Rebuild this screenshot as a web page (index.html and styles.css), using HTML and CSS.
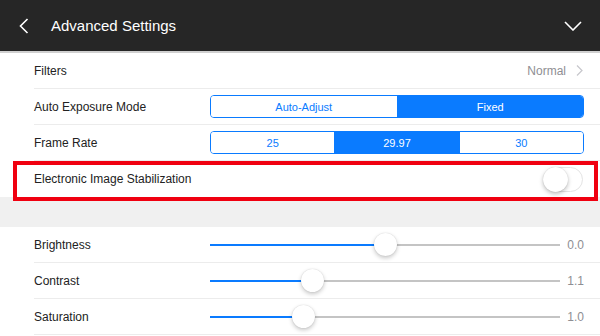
FILE: index.html
```html
<!DOCTYPE html>
<html lang="en">
<head>
  <meta charset="UTF-8">
  <meta name="viewport" content="width=device-width, initial-scale=1.0">
  <title>Advanced Settings</title>
  <link rel="stylesheet" href="styles.css">
</head>
<body>

  <!-- Barra superior -->
  <header class="topbar">
    <svg class="back-icon" width="10" height="16" viewBox="0 0 10 16">
      <path d="M8.5 1 L1.5 8 L8.5 15" fill="none" stroke="#fff" stroke-width="1.6"/>
    </svg>
    <h1 class="title">Advanced Settings</h1>
    <svg class="down-icon" width="18" height="10" viewBox="0 0 18 10">
      <path d="M1 1 L9 9 L17 1" fill="none" stroke="#fff" stroke-width="1.6"/>
    </svg>
  </header>

  <!-- Ajustes de cámara -->
  <section class="group">
    <div class="row">
      <div class="row-body">
        <span class="label">Filters</span>
        <span class="detail">Normal</span>
        <svg class="detail-arrow" width="7" height="11" viewBox="0 0 7 11">
          <path d="M1 0.5 L6 5.5 L1 10.5" fill="none" stroke="#c7c7cc" stroke-width="1.2"/>
        </svg>
      </div>
    </div>

    <div class="row">
      <div class="row-body">
        <span class="label">Auto Exposure Mode</span>
        <div class="segmented">
          <button class="segment">Auto-Adjust</button>
          <button class="segment active">Fixed</button>
        </div>
      </div>
    </div>

    <div class="row">
      <div class="row-body">
        <span class="label">Frame Rate</span>
        <div class="segmented">
          <button class="segment">25</button>
          <button class="segment active">29.97</button>
          <button class="segment">30</button>
        </div>
      </div>
    </div>

    <div class="row highlight">
      <div class="row-body no-line">
        <span class="label">Electronic Image Stabilization</span>
        <span class="switch"><span class="knob"></span></span>
      </div>
    </div>
  </section>

  <div class="spacer"></div>

  <!-- Ajustes de imagen -->
  <section class="group">
    <div class="row">
      <div class="row-body">
        <span class="label">Brightness</span>
        <div class="slider">
          <div class="track"><div class="fill" style="width: 50%"></div><span class="thumb" style="left: 50%"></span></div>
          <span class="value">0.0</span>
        </div>
      </div>
    </div>

    <div class="row">
      <div class="row-body">
        <span class="label">Contrast</span>
        <div class="slider">
          <div class="track"><div class="fill" style="width: 29%"></div><span class="thumb" style="left: 29%"></span></div>
          <span class="value">1.1</span>
        </div>
      </div>
    </div>

    <div class="row">
      <div class="row-body">
        <span class="label">Saturation</span>
        <div class="slider">
          <div class="track"><div class="fill" style="width: 26.5%"></div><span class="thumb" style="left: 26.5%"></span></div>
          <span class="value">1.0</span>
        </div>
      </div>
    </div>
  </section>

</body>
</html>
```

FILE: styles.css
```css
/* Estilos globales */
body {
  font-family: 'Liberation Sans', Arial, sans-serif;
  background-color: #fff;
  color: #222;
  margin: 0;
  padding: 0;
  overflow: hidden;
}

/* Barra superior */
.topbar {
  display: flex;
  align-items: center;
  height: 53px;
  background-color: #262626;
  border-bottom: 2px solid #d0d0d0;
  box-sizing: border-box;
  padding: 0 18px 0 19px;
}

.back-icon {
  margin-right: 22px;
}

.title {
  flex: 1;
  margin: 0;
  color: #fff;
  font-size: 15px;
  font-weight: normal;
}

.down-icon {
  margin-top: 1px;
}

/* Filas */
.row {
  display: flex;
  padding-left: 34px;
}

.row-body {
  flex: 1;
  display: flex;
  align-items: center;
  height: 35px;
  padding-right: 16px;
  border-bottom: 1px solid #ececec;
}

.row-body.no-line {
  height: 36px;
  border-bottom: none;
}

.label {
  width: 176px;
  font-size: 12px;
  color: #222;
}

.detail {
  margin-left: auto;
  margin-right: 10px;
  font-size: 12px;
  color: #8e8e93;
}

.detail-arrow {
  margin-right: 1px;
}

/* Control segmentado */
.segmented {
  flex: 1;
  display: flex;
  height: 23px;
  border: 1px solid #0a7bff;
  border-radius: 4px;
  overflow: hidden;
  box-sizing: border-box;
}

.segment {
  flex: 1;
  border: none;
  border-left: 1px solid #0a7bff;
  background-color: #fff;
  color: #0a7bff;
  font-family: inherit;
  font-size: 11px;
  padding: 0;
}

.segment:first-child {
  border-left: none;
}

.segment.active {
  background-color: #0a7bff;
  color: #fff;
}

/* Interruptor */
.highlight {
  position: relative;
}

.highlight::after {
  content: '';
  position: absolute;
  left: 13px;
  right: 2px;
  top: 0;
  bottom: -4px;
  border: 4px solid #f00010;
}

.switch {
  margin-left: auto;
  margin-right: 1px;
  position: relative;
  width: 40px;
  height: 25px;
  border: 1px solid #e4e4e4;
  border-radius: 13px;
  box-sizing: border-box;
  background-color: #fff;
}

.knob {
  position: absolute;
  left: -1px;
  top: -1px;
  width: 25px;
  height: 25px;
  border-radius: 50%;
  background-color: #fff;
  box-shadow: 0 2px 4px rgba(0, 0, 0, 0.25), 0 0 1px rgba(0, 0, 0, 0.2);
}

/* Separador gris */
.spacer {
  height: 30px;
  background-color: #f0f0f0;
}

/* Deslizadores */
.slider {
  flex: 1;
  display: flex;
  align-items: center;
}

.track {
  flex: 1;
  position: relative;
  height: 2px;
  background-color: #c4c4c4;
}

.fill {
  height: 100%;
  background-color: #0a7bff;
}

.thumb {
  position: absolute;
  top: -11px;
  width: 23px;
  height: 23px;
  margin-left: -11px;
  border-radius: 50%;
  background-color: #fff;
  box-shadow: 0 2px 4px rgba(0, 0, 0, 0.22), 0 0 1px rgba(0, 0, 0, 0.2);
}

.value {
  width: 24px;
  text-align: right;
  font-size: 12px;
  color: #8e8e93;
}
```
